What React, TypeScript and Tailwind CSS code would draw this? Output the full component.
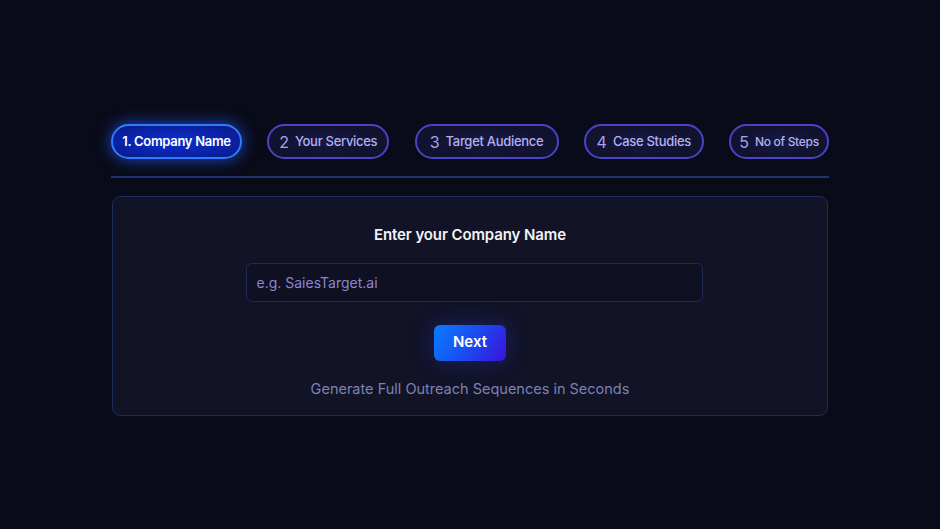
import React, { useState } from 'react';

interface Step {
  num: string;
  label: string;
  width: string;
  size: string;
}

const steps: Step[] = [
  { num: '2', label: 'Your Services', width: 'w-[122px]', size: 'text-[13px]' },
  { num: '3', label: 'Target Audience', width: 'w-[144px]', size: 'text-[13px]' },
  { num: '4', label: 'Case Studies', width: 'w-[120px]', size: 'text-[13px]' },
  { num: '5', label: 'No of Steps', width: 'w-[100px]', size: 'text-[12px]' },
];

const App: React.FC = () => {
  const [company, setCompany] = useState('');

  return (
    <div
      className="min-h-screen w-full bg-[#0a0b18] flex justify-center"
      style={{ fontFamily: 'Inter, "Open Sans", sans-serif' }}
    >
      <div className="w-[718px] pt-[124px]">
        {/* Steps */}
        <div className="flex items-center justify-between">
          <div className="w-[131px] h-[35px] flex items-center justify-center rounded-full border-2 border-[#2f7dff] bg-[radial-gradient(ellipse_at_center,#0a2fd0_0%,#0a22a8_60%,#0a1a80_100%)] shadow-[0_0_16px_rgba(30,90,255,0.8)]">
            <span className="text-[13px] font-semibold text-white tracking-[-0.3px] whitespace-nowrap">1. Company Name</span>
          </div>
          {steps.map((s) => (
            <div
              key={s.num}
              className={`${s.width} h-[35px] flex items-center justify-center gap-[6px] rounded-full border-2 border-[#4a42c8] bg-[radial-gradient(ellipse_at_center,#141a44_0%,#121330_60%,#10112a_100%)]`}
            >
              <span className="text-[16px] font-normal text-[#a7a3ee]">{s.num}</span>
              <span className={`${s.size} font-medium text-[#b4b0ee] tracking-[-0.3px] whitespace-nowrap`}>{s.label}</span>
            </div>
          ))}
        </div>

        {/* Divider */}
        <div className="mt-[17px] h-[2px] bg-[#1c3670]" />

        {/* Card */}
        <div className="mt-[18px] mx-[1px] rounded-[8px] border border-[#1d2b5c] bg-[#121327] flex flex-col items-center pt-[27px] pb-[16px]">
          <h2 className="text-[15px] font-semibold text-[#f2f2f6] tracking-[-0.1px]">Enter your Company Name</h2>
          <input
            value={company}
            onChange={(e) => setCompany(e.target.value)}
            placeholder="e.g. SaiesTarget.ai"
            className="mt-[16px] ml-[8px] w-[457px] h-[39px] rounded-[6px] border border-[#1f2a55] bg-[#0f1022] px-[10px] text-[14px] text-[#cfcdf5] placeholder:text-[#8a86d0] outline-none"
          />
          <button className="mt-[23px] w-[72px] h-[36px] rounded-[6px] bg-[linear-gradient(120deg,#0a7dff_0%,#1b4cf0_50%,#3a12dc_100%)] text-white text-[15px] font-semibold shadow-[0_0_22px_rgba(40,60,220,0.35)]">
            Next
          </button>
          <p className="mt-[17px] text-[14.5px] text-[#7d82b2]">Generate Full Outreach Sequences in Seconds</p>
        </div>
      </div>
    </div>
  );
};

export default App;
